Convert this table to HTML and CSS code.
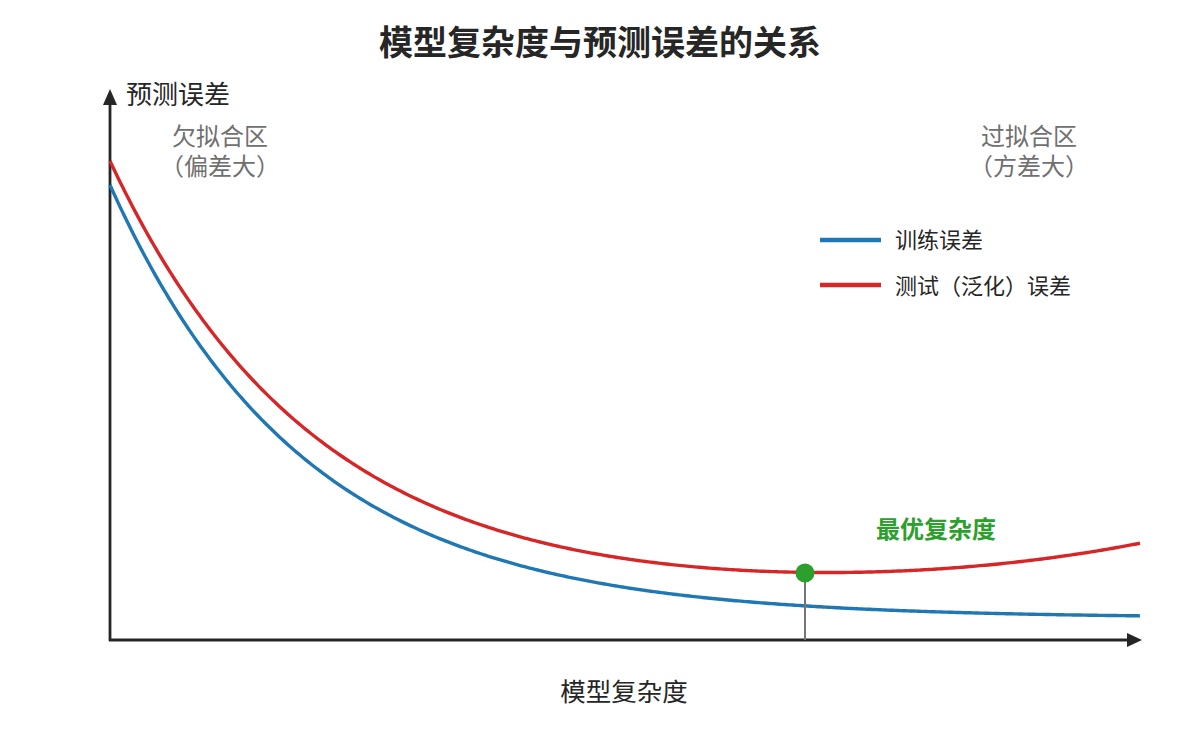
FILE: index.html
```html
<!DOCTYPE html>
<html lang="zh-CN">
<head>
<meta charset="utf-8">
<title>模型复杂度与预测误差的关系</title>
<link rel="stylesheet" href="styles.css">
</head>
<body>
<main class="figure">
  <h1 class="title">模型复杂度与预测误差的关系</h1>
  <svg class="plot" width="1200" height="586" viewBox="0 74 1200 586" xmlns="http://www.w3.org/2000/svg">
    <line class="axis" x1="110" y1="641" x2="110" y2="100"/>
    <polygon class="arrow" points="110,89 103,105 117,105"/>
    <line class="axis" x1="109" y1="640" x2="1130" y2="640"/>
    <polygon class="arrow" points="1142,640 1127,633 1127,647"/>

    <path id="train" class="curve train" d=""/>
    <path id="test" class="curve test" d=""/>

    <line class="guide" x1="805" y1="573" x2="805" y2="640"/>
    <circle class="opt-dot" cx="805" cy="573" r="9.5"/>

    <text class="ylabel" x="126" y="104">预测误差</text>

    <text class="region"><tspan x="220" y="145">欠拟合区</tspan><tspan x="220" y="175">（偏差大）</tspan></text>
    <text class="region"><tspan x="1029" y="145">过拟合区</tspan><tspan x="1029" y="175">（方差大）</tspan></text>

    <line class="legend-line train" x1="820" y1="240" x2="881" y2="240"/>
    <text class="legend-text" x="895" y="248">训练误差</text>
    <line class="legend-line test" x1="820" y1="285" x2="881" y2="285"/>
    <text class="legend-text" x="895" y="294">测试（泛化）误差</text>

    <text class="opt-label" x="936" y="538">最优复杂度</text>
  </svg>
  <div class="xlabel">模型复杂度</div>
</main>
<script src="script.js"></script>
</body>
</html>
```
FILE: styles.css
```css
html, body {
  margin: 0;
  padding: 0;
  background: #ffffff;
}

.figure {
  width: 1200px;
  height: 750px;
  display: flex;
  flex-direction: column;
  font-family: "Noto Sans CJK SC", "Noto Sans", sans-serif;
  color: #262626;
}

.title {
  margin: 0;
  padding-top: 8px;
  line-height: 66px;
  font-size: 34px;
  font-weight: 700;
  text-align: center;
  color: #262626;
}

.plot {
  display: block;
  flex: none;
}

.axis {
  stroke: #262626;
  stroke-width: 2.8;
}

.arrow {
  fill: #262626;
}

.curve {
  fill: none;
  stroke-width: 3.4;
  stroke-linejoin: round;
}

.train {
  stroke: #1f77b4;
}

.test {
  stroke: #d62728;
}

.guide {
  stroke: #757575;
  stroke-width: 2;
}

.opt-dot {
  fill: #2ca02c;
}

.ylabel {
  font-family: "Noto Sans CJK SC", sans-serif;
  font-size: 26px;
  fill: #262626;
}

.region {
  font-family: "Noto Sans CJK SC", sans-serif;
  font-size: 24px;
  fill: #707070;
  text-anchor: middle;
}

.legend-line {
  stroke-width: 4.5;
}

.legend-text {
  font-family: "Noto Sans CJK SC", sans-serif;
  font-size: 22px;
  fill: #262626;
}

.opt-label {
  font-family: "Noto Sans CJK SC", sans-serif;
  font-size: 24px;
  font-weight: 700;
  fill: #2ca02c;
  text-anchor: middle;
}

.xlabel {
  line-height: 60px;
  font-size: 25.5px;
  text-align: center;
  padding-left: 48px;
  color: #262626;
}
```
FILE: script.js
```js
(function () {
  function build(fn) {
    var d = '';
    for (var i = 0; i <= 400; i++) {
      var t = i / 400;
      var x = 110 + 1030 * t;
      var y = 640 - fn(t);
      d += (i ? 'L' : 'M') + x.toFixed(2) + ' ' + y.toFixed(2);
    }
    return d;
  }
  document.getElementById('train').setAttribute('d', build(function (t) {
    return 433 * Math.exp(-5.3 * t) + 22;
  }));
  document.getElementById('test').setAttribute('d', build(function (t) {
    return 435 * Math.exp(-5.05 * t) + 44 + 50 * Math.pow(t, 4.3);
  }));
})();
```
